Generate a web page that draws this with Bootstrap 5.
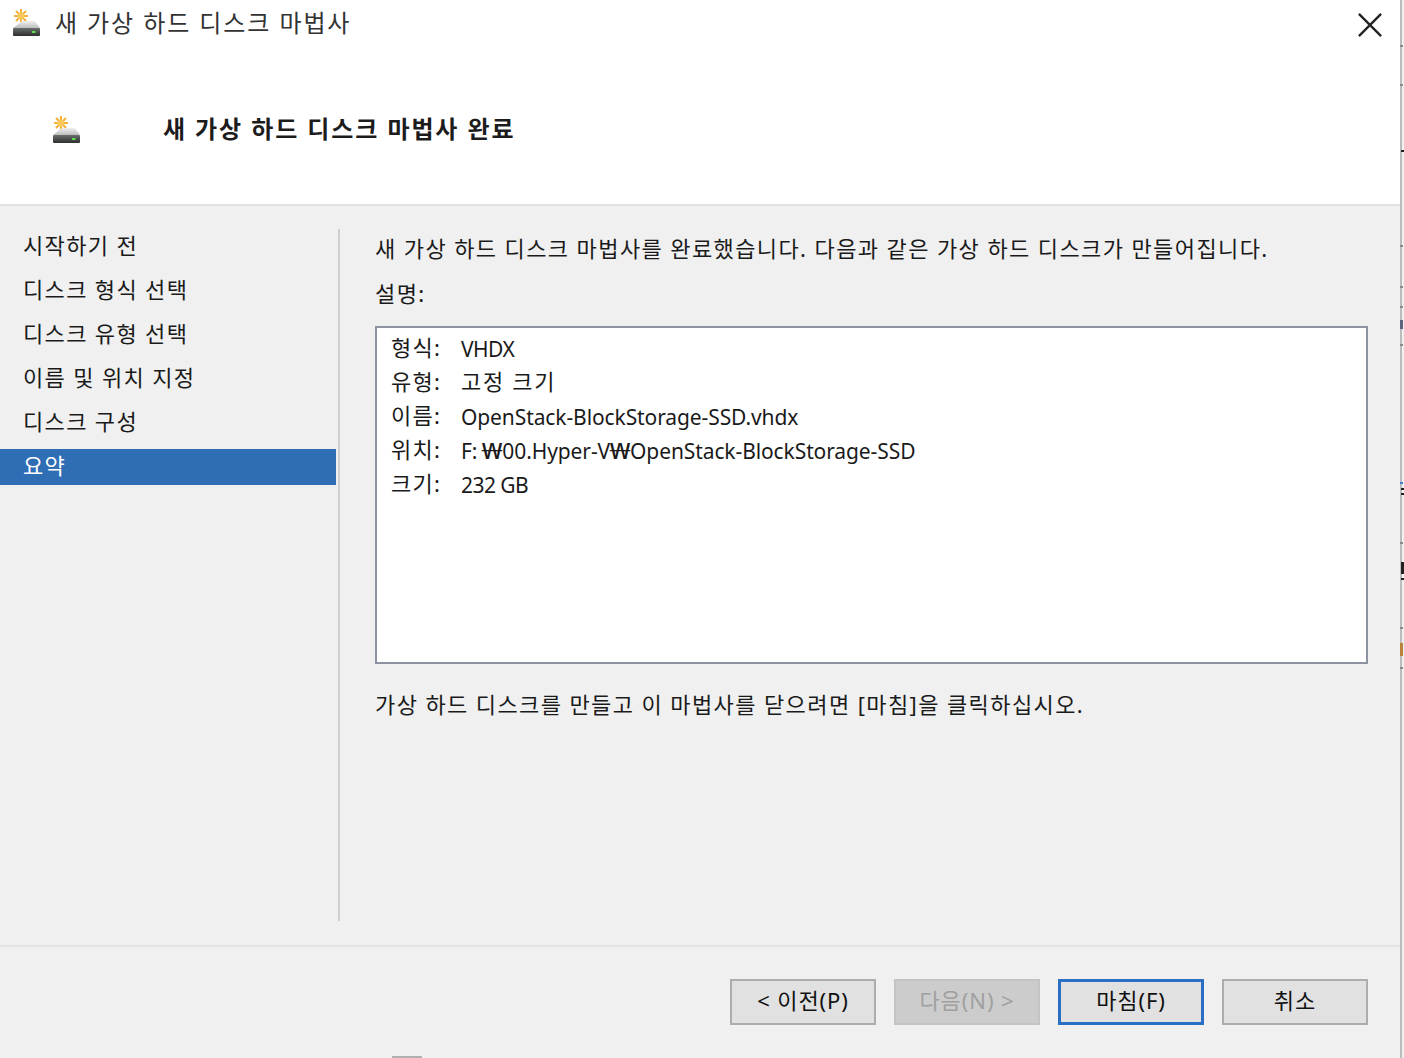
<!DOCTYPE html>
<html lang="ko">
<head>
<meta charset="utf-8">
<title>새 가상 하드 디스크 마법사</title>
<link href="https://cdn.jsdelivr.net/npm/bootstrap@5.3.0/dist/css/bootstrap.min.css" rel="stylesheet">
<style>
html,body{height:100%;overflow:hidden}
body{font-family:"Noto Sans","Noto Sans CJK KR",sans-serif;background:#f0f0f0;color:#1a1a1a;font-size:22px}
.wiz-shell{width:1404px;height:1058px;position:relative;overflow:hidden}
.wiz-win{width:1402px;height:1058px;border-right:2px solid #bcbcbc}
.wiz-top{background:#fff;height:204px}
.wiz-title{height:46px;padding-left:12px;font-size:24px;letter-spacing:1.9px;color:#333}
.wiz-title svg{width:28px;height:28px;margin-right:15px;margin-bottom:2px}
.wiz-close{background:none;border:0;padding:0;width:24px;height:24px;margin-right:20px}
.wiz-head{padding-left:52px;height:158px;padding-top:8px;font-size:24px;font-weight:700;letter-spacing:1.9px;color:#1c1c1c}
.wiz-head svg{width:28px;height:28px;margin-right:83px}
.wiz-rule{height:2px;background:#e1e1e1}
.wiz-body{height:739px}
.wiz-side{width:336px;padding-top:23px;margin-right:2px;flex:none}
.wiz-step{height:44px;padding-left:23px;font-size:22px;letter-spacing:1.35px;line-height:33px}
.wiz-step.on{height:36px;line-height:32px;background:#2f6db5;color:#fff}
.wiz-main{border-left:2px solid #cfcfcf;margin-top:23px;height:692px;padding-left:35px;padding-top:4px;width:1030px;flex:none}
.wiz-line{font-size:22px;letter-spacing:1.4px;line-height:30px}
.wiz-gap-a{margin-top:15px}
.wiz-gap-b{margin-top:25px}
.wiz-box{width:993px;height:338px;background:#fff;border:2px solid #8c92a0;padding:2px 14px 0;margin-top:18px}
.wiz-row{font-size:21px;height:34px;line-height:34px;letter-spacing:-.55px}
.wiz-key{width:70px;flex:none;font-size:22px;letter-spacing:1.3px}
.wiz-val-ko{font-size:22px;letter-spacing:1.7px}
.wiz-val-en{padding-top:2px}
.wiz-val-long{padding-top:2px;letter-spacing:-.1px}
.wiz-won{display:inline-block;width:20px;text-align:center;letter-spacing:0;transform:scaleX(1.5)}
.wiz-won.first{margin-left:5px}
.wiz-foot{height:112px;border-top:2px solid #e3e3e3;padding-right:32px;padding-top:32px;gap:18px}
.wiz-btn{width:146px;height:46px;border:2px solid #adadad;background:#e1e1e1;border-radius:0;font-size:22px;letter-spacing:.9px;color:#111;padding:0 0 4px;line-height:36px}
.wiz-btn.dis{background:#ccc;border-color:#c4c4c4;color:#a0a0a0;opacity:1}
.wiz-btn.def{border:3px solid #2a6fc4}
.wiz-tick{position:absolute;left:1400px;width:3px;height:2px;background:#8a8a8a}
.wiz-tick.dk{background:#222;left:1401px}
.t1{top:45px}.t2{top:84px}.t3{top:150px}.t4{top:245px}.t5{top:286px}.t6{top:306px}.t7{top:320px;height:9px;background:#5d6480}.t8{top:344px}.t9{top:482px;background:#3f7fd0}.t10{top:488px}.t11{top:493px}.t12{top:542px}.t13{top:562px;height:12px}.t14{top:578px}.t15{top:627px}.t16{top:643px;height:13px;background:#b8843a}.t17{top:667px}
.wiz-peek{position:absolute;left:392px;top:1056px;width:30px;height:2px;background:#b0b0b0}
</style>
</head>
<body>
<div class="wiz-shell">
<div class="wiz-win d-flex flex-column">
  <div class="wiz-top">
    <div class="wiz-title d-flex align-items-center">
      <svg viewBox="0 0 28 28"><use href="#disk"/></svg>
      <span class="flex-grow-1">새 가상 하드 디스크 마법사</span>
      <button class="wiz-close" aria-label="닫기"><svg class="m-0 d-block" width="24" height="24" viewBox="0 0 24 24"><path d="M2.5 2.5L21.5 21.5M21.5 2.5L2.5 21.5" stroke="#222" stroke-width="2" fill="none"/></svg></button>
    </div>
    <div class="wiz-head d-flex align-items-center">
      <svg viewBox="0 0 28 28"><use href="#disk"/></svg>
      <span>새 가상 하드 디스크 마법사 완료</span>
    </div>
  </div>
  <div class="wiz-rule"></div>
  <div class="wiz-body d-flex">
    <div class="wiz-side">
      <div class="wiz-step">시작하기 전</div>
      <div class="wiz-step">디스크 형식 선택</div>
      <div class="wiz-step">디스크 유형 선택</div>
      <div class="wiz-step">이름 및 위치 지정</div>
      <div class="wiz-step">디스크 구성</div>
      <div class="wiz-step on">요약</div>
    </div>
    <div class="wiz-main">
      <div class="wiz-line">새 가상 하드 디스크 마법사를 완료했습니다. 다음과 같은 가상 하드 디스크가 만들어집니다.</div>
      <div class="wiz-line wiz-gap-a">설명:</div>
      <div class="wiz-box">
        <div class="wiz-row d-flex"><span class="wiz-key">형식:</span><span class="wiz-val-en">VHDX</span></div>
        <div class="wiz-row d-flex"><span class="wiz-key">유형:</span><span class="wiz-val-ko">고정 크기</span></div>
        <div class="wiz-row d-flex"><span class="wiz-key">이름:</span><span class="wiz-val-long">OpenStack-BlockStorage-SSD.vhdx</span></div>
        <div class="wiz-row d-flex"><span class="wiz-key">위치:</span><span class="wiz-val-long">F:<span class="wiz-won first">₩</span>00.Hyper-V<span class="wiz-won">₩</span>OpenStack-BlockStorage-SSD</span></div>
        <div class="wiz-row d-flex"><span class="wiz-key">크기:</span><span class="wiz-val-en">232 GB</span></div>
      </div>
      <div class="wiz-line wiz-gap-b">가상 하드 디스크를 만들고 이 마법사를 닫으려면 [마침]을 클릭하십시오.</div>
    </div>
  </div>
  <div class="wiz-foot d-flex justify-content-end">
    <button class="btn wiz-btn">&lt; 이전(P)</button>
    <button class="btn wiz-btn dis">다음(N) &gt;</button>
    <button class="btn wiz-btn def">마침(F)</button>
    <button class="btn wiz-btn">취소</button>
  </div>
</div>
<i class="wiz-tick t1"></i><i class="wiz-tick t2"></i><i class="wiz-tick dk t3"></i><i class="wiz-tick t4"></i><i class="wiz-tick t5"></i><i class="wiz-tick t6"></i><i class="wiz-tick t7"></i><i class="wiz-tick t8"></i><i class="wiz-tick t9"></i><i class="wiz-tick dk t10"></i><i class="wiz-tick dk t11"></i><i class="wiz-tick t12"></i><i class="wiz-tick dk t13"></i><i class="wiz-tick dk t14"></i><i class="wiz-tick t15"></i><i class="wiz-tick t16"></i><i class="wiz-tick t17"></i>
<div class="wiz-peek"></div>
</div>
<svg width="0" height="0" class="d-block position-absolute">
  <defs>
    <linearGradient id="dtop" x1="0" y1="0" x2="0" y2="1"><stop offset="0" stop-color="#f0f0f0"/><stop offset="1" stop-color="#bdbdbd"/></linearGradient>
    <linearGradient id="dface" x1="0" y1="0" x2="0" y2="1"><stop offset="0" stop-color="#6a6e6c"/><stop offset="1" stop-color="#2c2f2e"/></linearGradient>
    <g id="disk">
      <path d="M9 1v14M2 8h14M4 3l10 10M14 3L4 13" stroke="#f4b13a" stroke-width="2" fill="none"/>
      <circle cx="9" cy="8" r="3.4" fill="#f9c95a"/>
      <path d="M10 13h13l5 7H1z" fill="url(#dtop)"/>
      <rect x="1" y="20" width="27" height="8" rx="1" fill="url(#dface)"/>
      <rect x="20" y="23" width="3.5" height="2" fill="#5de04d"/>
    </g>
  </defs>
</svg>
</body>
</html>
